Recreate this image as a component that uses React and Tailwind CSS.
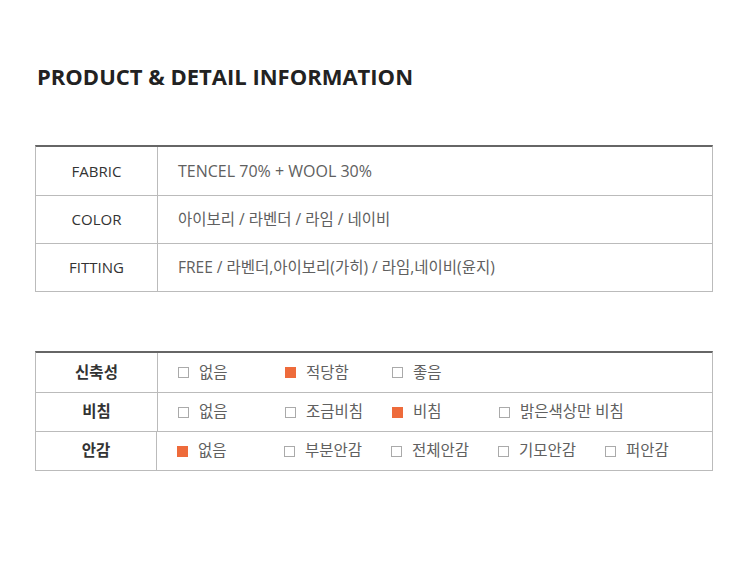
const info = [
  { label: "FABRIC", value: "TENCEL 70% + WOOL 30%" },
  { label: "COLOR", value: "아이보리 / 라벤더 / 라임 / 네이비" },
  { label: "FITTING", value: "FREE / 라벤더,아이보리(가히) / 라임,네이비(윤지)" },
];

const checks = [
  { label: "신축성", options: [["없음", false], ["적당함", true], ["좋음", false]] },
  { label: "비침", options: [["없음", false], ["조금비침", false], ["비침", true], ["밝은색상만 비침", false]] },
  { label: "안감", options: [["없음", true], ["부분안감", false], ["전체안감", false], ["기모안감", false], ["퍼안감", false]] },
];

function Box({ on }) {
  return on ? (
    <span className="w-[11px] h-[11px] bg-[#ee6b3b] shrink-0" />
  ) : (
    <span className="w-[11px] h-[11px] border border-[#aaa] bg-white shrink-0" />
  );
}

export default function App() {
  return (
    <div
      className="w-[750px] h-[566px] bg-white text-[#333] pt-[61px]"
      style={{ fontFamily: '"Open Sans", "Noto Sans CJK KR", sans-serif' }}
    >
      <h1 className="ml-[37px] text-[22px] leading-[30px] font-bold text-[#222]">
        PRODUCT &amp; DETAIL INFORMATION
      </h1>

      {/* info table */}
      <div className="mx-[35px] mt-[54px] w-[678px] border-t-2 border-t-[#666] border-x border-b border-[#bbb]">
        {info.map((r, i) => (
          <div key={r.label} className={`flex h-[48px] ${i > 0 ? "border-t border-[#bbb]" : ""}`}>
            <div className="w-[122px] border-r border-[#bbb] flex items-center justify-center text-[15px] text-[#333]">
              {r.label}
            </div>
            <div className={`flex-1 flex items-center pl-[20px] text-[#606060] ${i === 0 ? "text-[16px]" : "text-[15.5px]"}`}>
              {r.value}
            </div>
          </div>
        ))}
      </div>

      {/* check table */}
      <div className="mx-[35px] mt-[59px] w-[678px] border-t-2 border-t-[#666] border-x border-b border-[#bbb]">
        {checks.map((r, i) => (
          <div key={r.label} className={`flex h-[39px] ${i > 0 ? "border-t border-[#bbb]" : ""}`}>
            <div className="w-[122px] border-r border-[#bbb] flex items-center justify-center text-[15.5px] font-bold text-[#333]">
              {r.label}
            </div>
            <div className="flex-1 flex items-center pl-[20px]">
              {r.options.map(([t, on]) => (
                <div key={t} className="w-[107px] flex items-center gap-[10px] text-[15.5px] text-[#606060] whitespace-nowrap">
                  <Box on={on} />
                  <span>{t}</span>
                </div>
              ))}
            </div>
          </div>
        ))}
      </div>
    </div>
  );
}
